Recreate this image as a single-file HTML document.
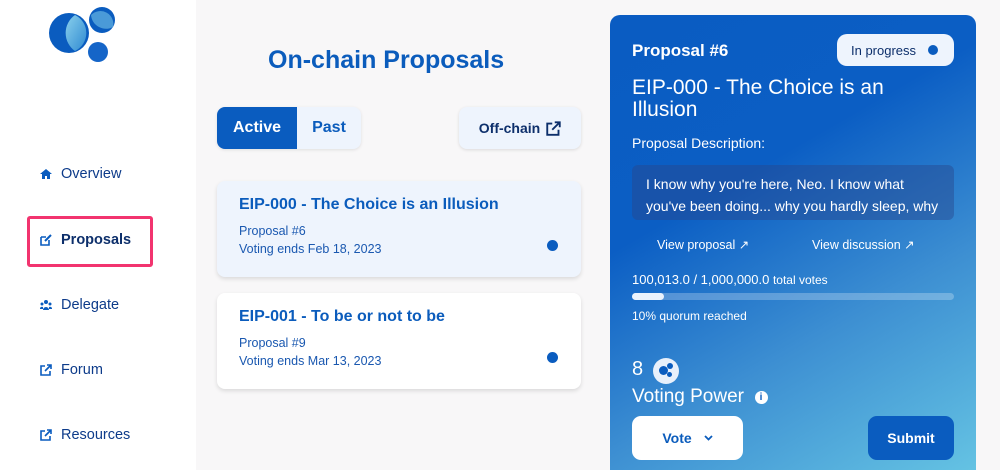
<!DOCTYPE html>
<html><head><style>
*{box-sizing:border-box;margin:0;padding:0}
html,body{width:1000px;height:470px;overflow:hidden}
body{background:#f8f7f8;font-family:"Liberation Sans",sans-serif;position:relative;color:#0b3c8c}
.side{position:absolute;left:0;top:0;width:196px;height:470px;background:#fff}
.nav{position:absolute;left:40px;font-size:14.5px;color:#0d3b8a;display:flex;align-items:center;gap:9px}
.nav svg{width:12px;height:12px}
.hl{position:absolute;left:27px;top:216px;width:126px;height:51px;border:3px solid #f2346f;border-radius:3px}
h1{position:absolute;left:268px;top:46px;font-size:25px;color:#0b5cbc;font-weight:bold}
.tabs{position:absolute;left:217px;top:107px;width:144px;height:42px;border-radius:8px;background:#eef4fd;display:flex;overflow:hidden;box-shadow:0 1px 3px rgba(0,0,0,.1)}
.tabs div{flex:1;display:flex;align-items:center;justify-content:center;font-weight:bold;font-size:16px;color:#0b5cbc}
.tabs .a{background:#0a5cbf;color:#fff;flex:0 0 80px}
.off{position:absolute;left:459px;top:107px;width:122px;height:42px;border-radius:8px;background:#eef4fd;box-shadow:0 1px 3px rgba(0,0,0,.12);display:flex;align-items:center;justify-content:center;gap:6px;font-weight:bold;font-size:14px;color:#0d2f6b}
.card{position:absolute;left:217px;width:364px;height:96px;border-radius:8px;box-shadow:0 2px 4px rgba(0,0,0,.12);padding:15px 22px}
.card b{display:block;font-size:16px;color:#0b5cbc;margin-bottom:8px}
.card p{font-size:12.5px;color:#1a58b0;line-height:18px}
.card i{position:absolute;right:23px;top:59px;width:11px;height:11px;border-radius:50%;background:#0a5cbf}
.panel{position:absolute;left:610px;top:15px;width:366px;height:470px;border-radius:10px;background:linear-gradient(150deg,#0a5cc2 0%,#0b5ec4 35%,#3d8fd2 65%,#67c6e4 100%);color:#fff}
</style></head><body>
<div class="side">
<svg style="position:absolute;left:0;top:0" width="196" height="80" viewBox="0 0 196 80">
<defs><linearGradient id="g" x1="0" y1="0" x2="1" y2="1"><stop offset="0" stop-color="#8ad0ec"/><stop offset="1" stop-color="#2f8ad2"/></linearGradient></defs>
<circle cx="69" cy="33" r="20" fill="#0a5cbf"/><path d="M75 15a20 20 0 0 1 0 36a22 22 0 0 1 0-36z" fill="url(#g)"/>
<circle cx="102" cy="20" r="13" fill="#0a5cbf"/><path d="M91 15a13 13 0 0 1 22 12a15 15 0 0 1-22-12z" fill="#4a9ad8"/>
<circle cx="98" cy="52" r="10" fill="#1565c8"/></svg>
<div class="nav" style="top:166px"><svg viewBox="0 0 12 12"><path d="M6 1L0 6h2v5h3V8h2v3h3V6h2z" fill="#0a5cbf"/></svg>Overview</div>
<div class="hl"></div>
<div class="nav" style="top:232px;font-weight:bold;color:#0d2f6b"><svg viewBox="0 0 12 12"><path d="M1 3h5M1 3v8h8V6" stroke="#0a5cbf" stroke-width="1.6" fill="none"/><path d="M5 7l6-6" stroke="#0a5cbf" stroke-width="2"/></svg>Proposals</div>
<div class="nav" style="top:297px"><svg viewBox="0 0 12 12"><circle cx="6" cy="3" r="2" fill="#0a5cbf"/><circle cx="2" cy="5" r="1.5" fill="#0a5cbf"/><circle cx="10" cy="5" r="1.5" fill="#0a5cbf"/><path d="M3 11a3 3 0 0 1 6 0zM0 10a2 2 0 0 1 3-2v2zM12 10a2 2 0 0 0-3-2v2z" fill="#0a5cbf"/></svg>Delegate</div>
<div class="nav" style="top:362px"><svg viewBox="0 0 12 12"><path d="M5 2H1v9h9V7M7 1h4v4M11 1L5 7" stroke="#0a5cbf" stroke-width="1.6" fill="none"/></svg>Forum</div>
<div class="nav" style="top:427px"><svg viewBox="0 0 12 12"><path d="M5 2H1v9h9V7M7 1h4v4M11 1L5 7" stroke="#0a5cbf" stroke-width="1.6" fill="none"/></svg>Resources</div>
</div>
<h1>On-chain Proposals</h1>
<div class="tabs"><div class="a">Active</div><div>Past</div></div>
<div class="off">Off-chain <svg width="15" height="15" viewBox="0 0 12 12"><path d="M5 2H1v9h9V7M7 1h4v4M11 1L5 7" stroke="#0d2f6b" stroke-width="1.5" fill="none"/></svg></div>
<div class="card" style="top:181px;background:#eef4fd"><b>EIP-000 - The Choice is an Illusion</b><p>Proposal #6<br>Voting ends Feb 18, 2023</p><i></i></div>
<div class="card" style="top:293px;background:#fff"><b>EIP-001 - To be or not to be</b><p>Proposal #9<br>Voting ends Mar 13, 2023</p><i></i></div>
<div class="panel">
<div style="position:absolute;left:22px;top:26px;font-size:17px;font-weight:bold">Proposal #6</div>
<div style="position:absolute;left:227px;top:19px;width:117px;height:32px;border-radius:10px;background:#eef4fd;color:#0d2f6b;font-size:13px;display:flex;align-items:center;padding-left:14px">In progress<span style="position:absolute;right:16px;width:10px;height:10px;border-radius:50%;background:#0a5cbf"></span></div>
<div style="position:absolute;left:22px;top:62px;font-size:21px;line-height:22px;width:320px">EIP-000 - The Choice is an Illusion</div>
<div style="position:absolute;left:22px;top:120px;font-size:14px">Proposal Description:</div>
<div style="position:absolute;left:22px;top:150px;width:322px;height:55px;border-radius:6px;background:rgba(40,70,140,.45);overflow:hidden;padding:8px 14px;font-size:14px;line-height:22px">I know why you're here, Neo. I know what you've been doing... why you hardly sleep, why you live alone</div>
<div style="position:absolute;left:47px;top:222px;font-size:12.5px">View proposal ↗</div>
<div style="position:absolute;left:202px;top:222px;font-size:12.5px">View discussion ↗</div>
<div style="position:absolute;left:22px;top:257px;font-size:13px">100,013.0 / 1,000,000.0 <span style="font-size:12px">total votes</span></div>
<div style="position:absolute;left:22px;top:278px;width:322px;height:7px;border-radius:4px;background:rgba(255,255,255,.25)"><div style="width:32px;height:7px;border-radius:4px;background:#eaf2fc"></div></div>
<div style="position:absolute;left:22px;top:294px;font-size:12px">10% quorum reached</div>
<div style="position:absolute;left:22px;top:343px;font-size:20px">8</div>
<div style="position:absolute;left:43px;top:343px;width:26px;height:26px;border-radius:50%;background:#e8f0fb"><span style="position:absolute;left:6px;top:8px;width:9px;height:9px;border-radius:50%;background:#0a5cbf"></span><span style="position:absolute;left:14px;top:5px;width:6px;height:6px;border-radius:50%;background:#0a5cbf"></span><span style="position:absolute;left:14px;top:14px;width:5px;height:5px;border-radius:50%;background:#0a5cbf"></span></div>
<div style="position:absolute;left:22px;top:371px;font-size:19px">Voting Power &nbsp;<span style="display:inline-block;width:13px;height:13px;border-radius:50%;background:#fff;color:#0a5cbf;font-size:10px;text-align:center;line-height:13px;font-weight:bold;vertical-align:2px">i</span></div>
<div style="position:absolute;left:22px;top:401px;width:111px;height:44px;border-radius:9px;background:#fff;color:#0b5cbc;font-weight:bold;font-size:14px;display:flex;align-items:center;justify-content:center;gap:12px">Vote <svg width="9" height="6" viewBox="0 0 9 6"><path d="M1 1l3.5 3.5L8 1" stroke="#0b5cbc" stroke-width="1.8" fill="none"/></svg></div>
<div style="position:absolute;left:258px;top:401px;width:86px;height:44px;border-radius:9px;background:#0a5cbf;font-weight:bold;font-size:14px;display:flex;align-items:center;justify-content:center">Submit</div>
</div>
</body></html>
